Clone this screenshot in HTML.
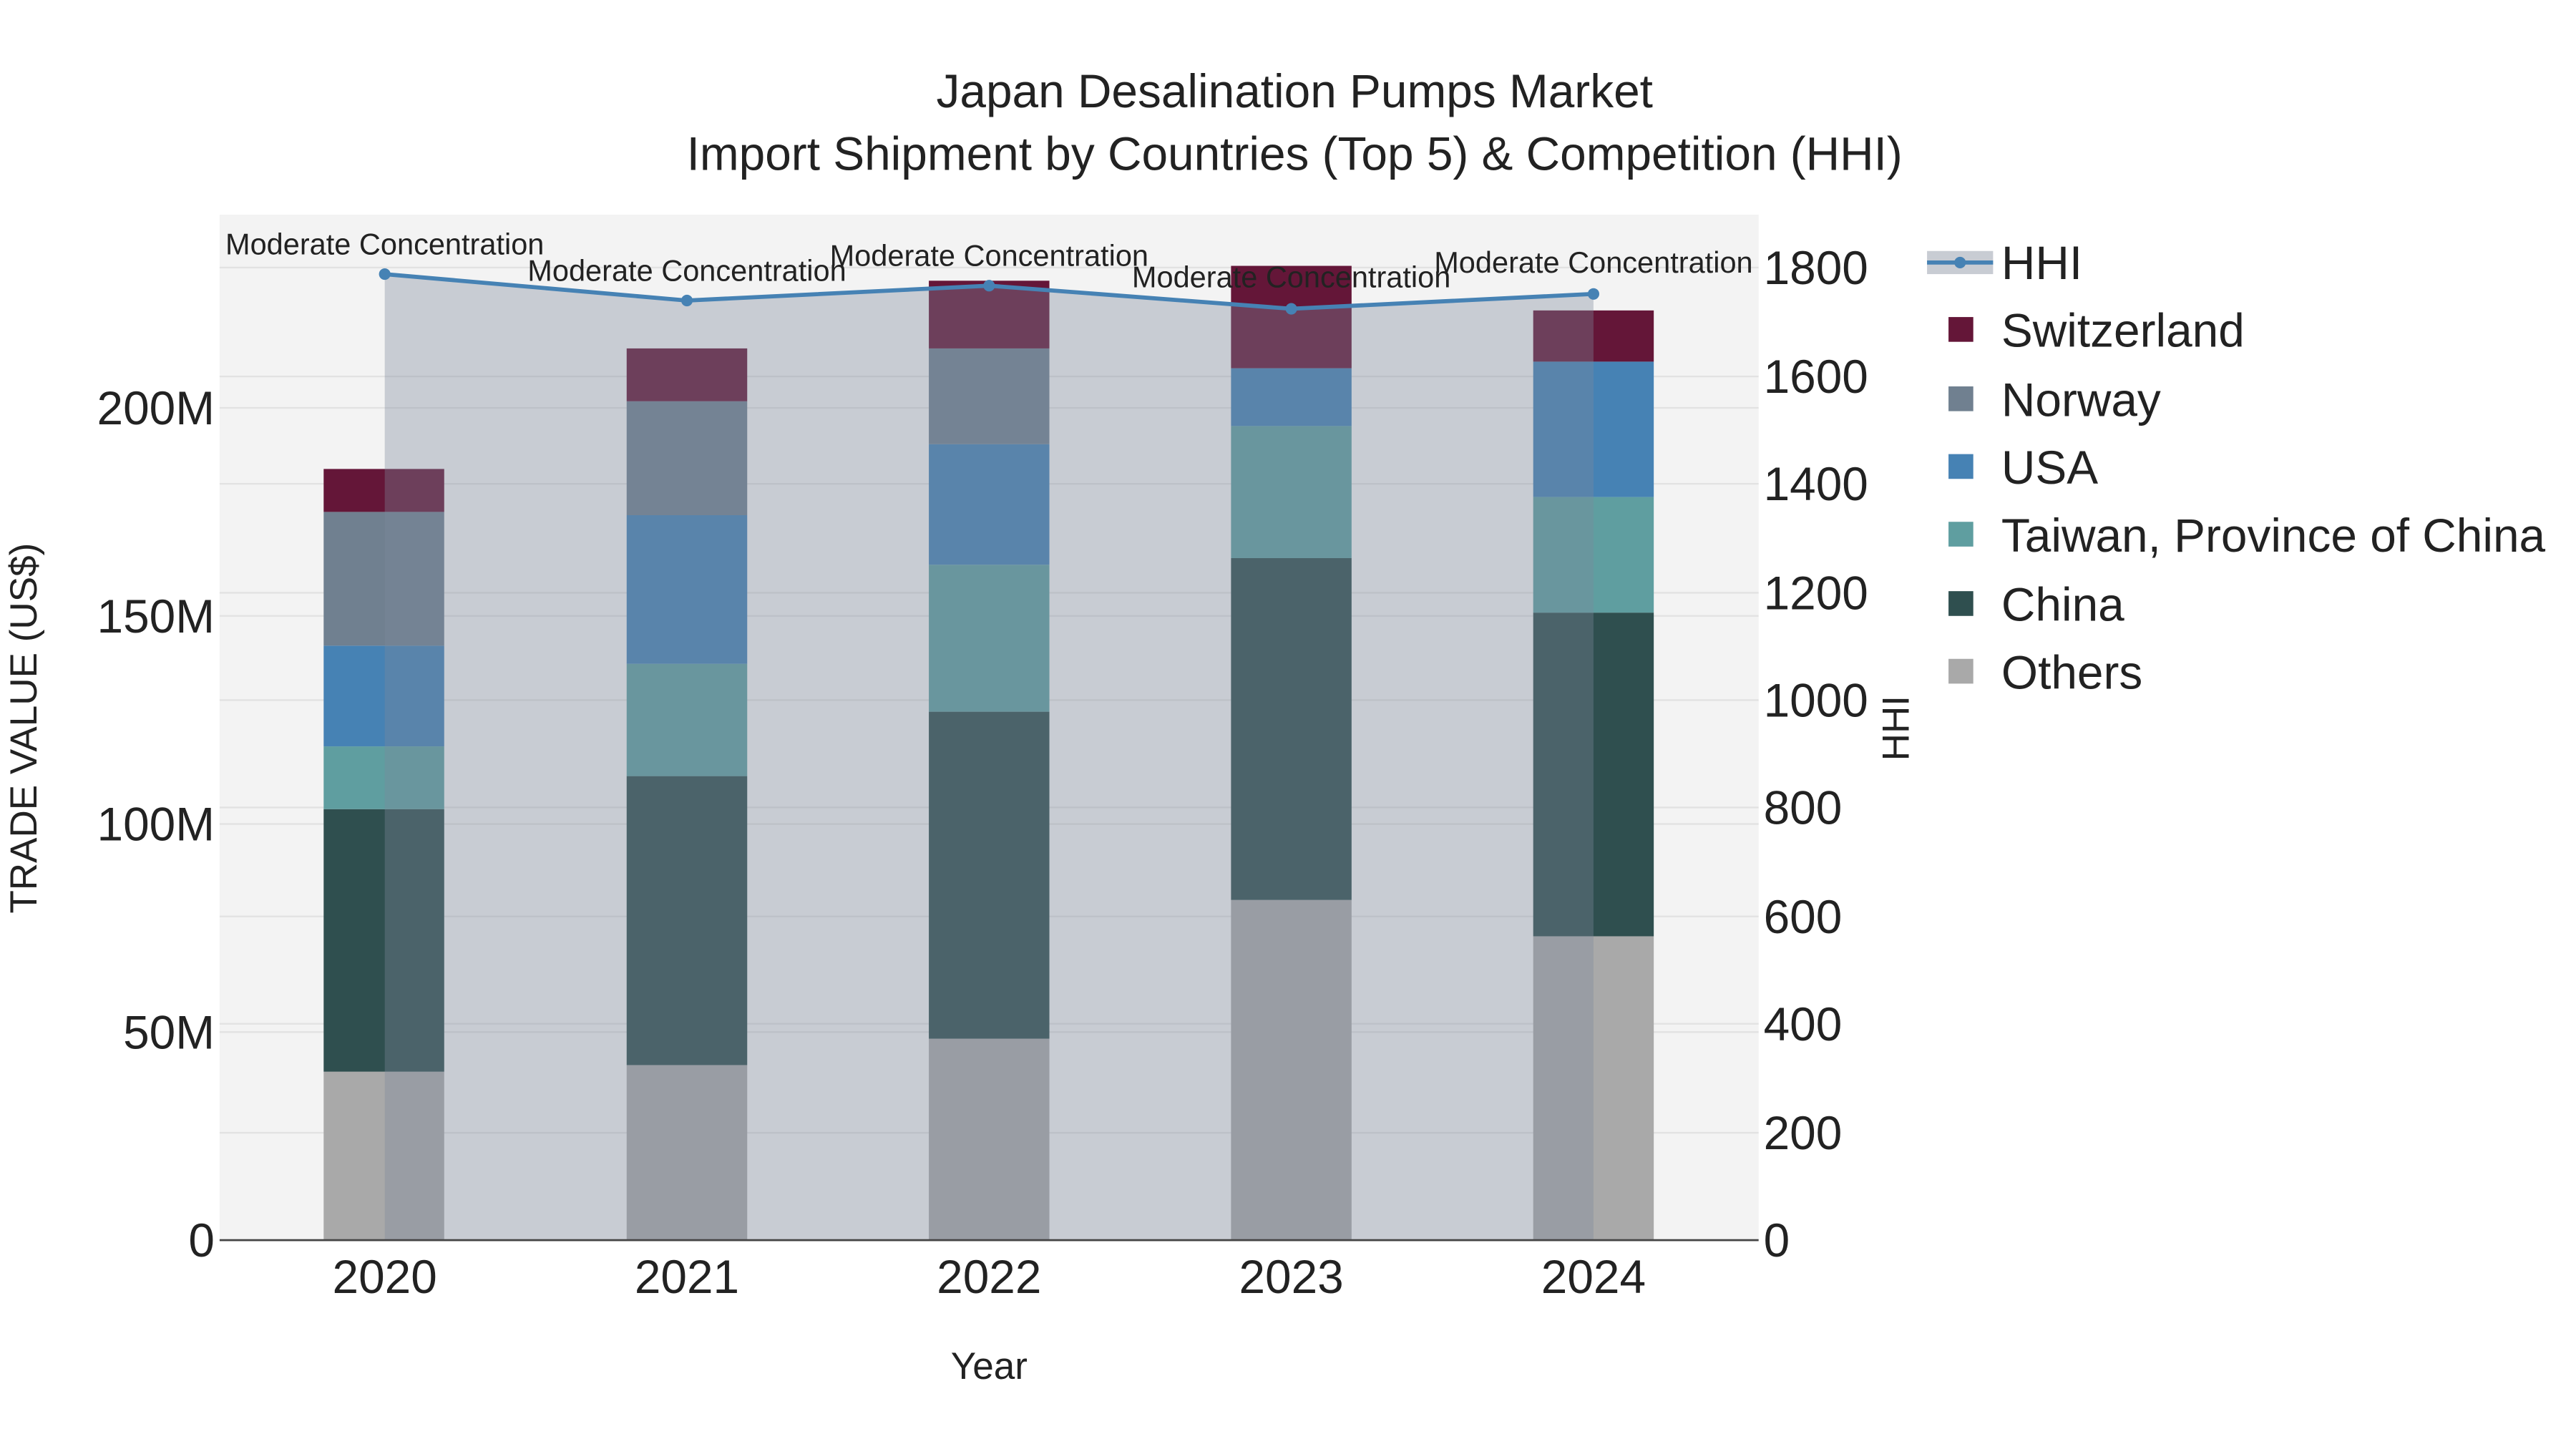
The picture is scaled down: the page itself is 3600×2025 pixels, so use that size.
<!DOCTYPE html>
<html><head><meta charset="utf-8"><style>
html,body{margin:0;padding:0;background:#fff;width:3600px;height:2025px;overflow:hidden}
svg{display:block}
text{font-family:"Liberation Sans",sans-serif;fill:#222}
</style></head><body>
<svg width="3600" height="2025" viewBox="0 0 1560 877.5" preserveAspectRatio="none" xmlns="http://www.w3.org/2000/svg">
<rect x="0" y="0" width="1560" height="877.5" fill="#fff"/>
<rect x="133" y="130" width="932" height="621" fill="#f3f3f3"/>
<g stroke="#e2e2e2" stroke-width="1">
<line x1="133" x2="1065" y1="625" y2="625"/><line x1="133" x2="1065" y1="499" y2="499"/>
<line x1="133" x2="1065" y1="373" y2="373"/><line x1="133" x2="1065" y1="247" y2="247"/>
<line x1="133" x2="1065" y1="686" y2="686"/><line x1="133" x2="1065" y1="620" y2="620"/>
<line x1="133" x2="1065" y1="555" y2="555"/><line x1="133" x2="1065" y1="489" y2="489"/>
<line x1="133" x2="1065" y1="424" y2="424"/><line x1="133" x2="1065" y1="359" y2="359"/>
<line x1="133" x2="1065" y1="293" y2="293"/><line x1="133" x2="1065" y1="228" y2="228"/>
<line x1="133" x2="1065" y1="162" y2="162"/>
</g>
<g>
<rect x="196" y="649" width="73" height="102" fill="#a9a9a9"/>
<rect x="196" y="490" width="73" height="159" fill="#2f4f4f"/>
<rect x="196" y="452" width="73" height="38" fill="#5f9ea0"/>
<rect x="196" y="391" width="73" height="61" fill="#4682b4"/>
<rect x="196" y="310" width="73" height="81" fill="#708090"/>
<rect x="196" y="284" width="73" height="26" fill="#641638"/>
<rect x="379.5" y="645" width="73" height="106" fill="#a9a9a9"/>
<rect x="379.5" y="470" width="73" height="175" fill="#2f4f4f"/>
<rect x="379.5" y="402" width="73" height="68" fill="#5f9ea0"/>
<rect x="379.5" y="312" width="73" height="90" fill="#4682b4"/>
<rect x="379.5" y="243" width="73" height="69" fill="#708090"/>
<rect x="379.5" y="211" width="73" height="32" fill="#641638"/>
<rect x="562.5" y="629" width="73" height="122" fill="#a9a9a9"/>
<rect x="562.5" y="431" width="73" height="198" fill="#2f4f4f"/>
<rect x="562.5" y="342" width="73" height="89" fill="#5f9ea0"/>
<rect x="562.5" y="269" width="73" height="73" fill="#4682b4"/>
<rect x="562.5" y="211" width="73" height="58" fill="#708090"/>
<rect x="562.5" y="170" width="73" height="41" fill="#641638"/>
<rect x="745.5" y="545" width="73" height="206" fill="#a9a9a9"/>
<rect x="745.5" y="338" width="73" height="207" fill="#2f4f4f"/>
<rect x="745.5" y="258" width="73" height="80" fill="#5f9ea0"/>
<rect x="745.5" y="223" width="73" height="35" fill="#4682b4"/>
<rect x="745.5" y="161" width="73" height="62" fill="#641638"/>
<rect x="928.5" y="567" width="73" height="184" fill="#a9a9a9"/>
<rect x="928.5" y="371" width="73" height="196" fill="#2f4f4f"/>
<rect x="928.5" y="301" width="73" height="70" fill="#5f9ea0"/>
<rect x="928.5" y="219" width="73" height="82" fill="#4682b4"/>
<rect x="928.5" y="188" width="73" height="31" fill="#641638"/>
</g>
<polygon points="233,166 416,182 599,173 782,187 965,178 965,751 233,751" fill="rgb(125,136,155)" fill-opacity="0.36"/>
<polyline points="233,166 416,182 599,173 782,187 965,178" fill="none" stroke="#4682b4" stroke-width="2.5"/>
<g fill="#4682b4"><circle cx="233" cy="166" r="3.5"/><circle cx="416" cy="182" r="3.5"/><circle cx="599" cy="173" r="3.5"/><circle cx="782" cy="187" r="3.5"/><circle cx="965" cy="178" r="3.5"/></g>
<line x1="133" x2="1065" y1="751" y2="751" stroke="#444" stroke-width="1.2"/>
<g font-size="18" text-anchor="middle">
<text x="233" y="154">Moderate Concentration</text>
<text x="416" y="170">Moderate Concentration</text>
<text x="599" y="161">Moderate Concentration</text>
<text x="782" y="174">Moderate Concentration</text>
<text x="965" y="165">Moderate Concentration</text>
</g>
<g font-size="28.5" text-anchor="middle">
<text x="784" y="65">Japan Desalination Pumps Market</text>
<text x="784" y="103">Import Shipment by Countries (Top 5) &amp; Competition (HHI)</text>
</g>
<g font-size="28.5" text-anchor="end">
<text x="130" y="761">0</text><text x="130" y="635">50M</text><text x="130" y="509">100M</text>
<text x="130" y="383">150M</text><text x="130" y="257">200M</text>
</g>
<g font-size="28.5" text-anchor="start">
<text x="1068" y="761">0</text><text x="1068" y="696">200</text><text x="1068" y="630">400</text>
<text x="1068" y="565">600</text><text x="1068" y="499">800</text><text x="1068" y="434">1000</text>
<text x="1068" y="369">1200</text><text x="1068" y="303">1400</text><text x="1068" y="238">1600</text>
<text x="1068" y="172">1800</text>
</g>
<g font-size="28.5" text-anchor="middle">
<text x="233" y="783">2020</text><text x="416" y="783">2021</text><text x="599" y="783">2022</text>
<text x="782" y="783">2023</text><text x="965" y="783">2024</text>
</g>
<text x="599" y="835" font-size="23" text-anchor="middle">Year</text>
<text transform="translate(22,441) rotate(-90)" font-size="23" text-anchor="middle">TRADE VALUE (US$)</text>
<text transform="translate(1156,441) rotate(-90)" font-size="23" text-anchor="middle">HHI</text>
<g font-size="28.5">
<rect x="1167" y="152" width="40" height="14" fill="rgb(200,204,211)"/>
<line x1="1167" x2="1207" y1="159" y2="159" stroke="#4682b4" stroke-width="2.5"/>
<circle cx="1187" cy="159" r="3.5" fill="#4682b4"/>
<text x="1212" y="169">HHI</text>
<rect x="1180" y="192" width="15" height="15" fill="#641638"/><text x="1212" y="210">Switzerland</text>
<rect x="1180" y="234" width="15" height="15" fill="#708090"/><text x="1212" y="252">Norway</text>
<rect x="1180" y="275" width="15" height="15" fill="#4682b4"/><text x="1212" y="293">USA</text>
<rect x="1180" y="316" width="15" height="15" fill="#5f9ea0"/><text x="1212" y="334">Taiwan, Province of China</text>
<rect x="1180" y="358" width="15" height="15" fill="#2f4f4f"/><text x="1212" y="376">China</text>
<rect x="1180" y="399" width="15" height="15" fill="#a9a9a9"/><text x="1212" y="417">Others</text>
</g>
</svg>
</body></html>
